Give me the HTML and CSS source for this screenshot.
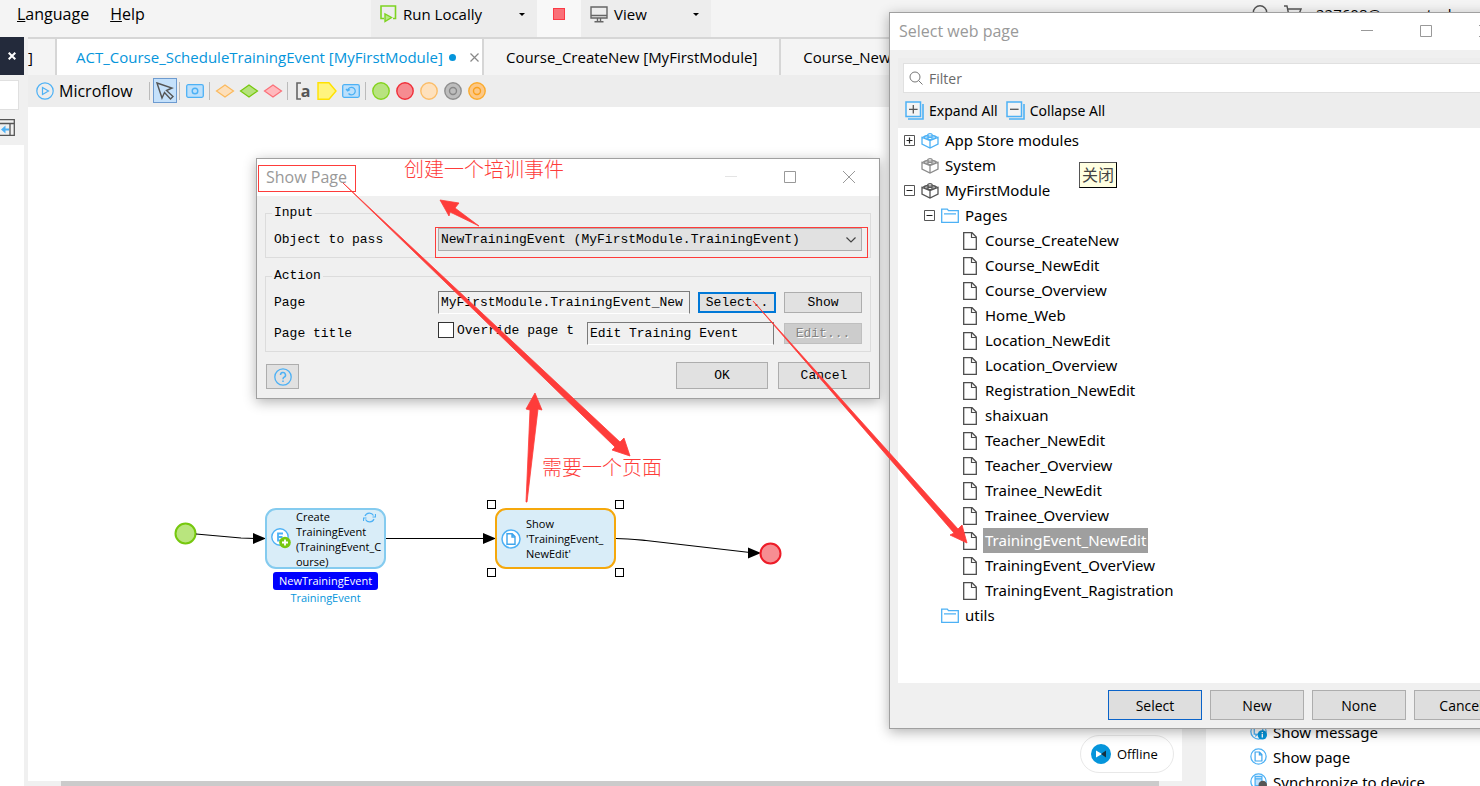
FILE: index.html
```html
<!DOCTYPE html>
<html lang="zh-CN">
<head>
    <meta charset="UTF-8">
    <meta name="viewport" content="width=device-width, initial-scale=1.0">
    <title>ACT_Course_ScheduleTrainingEvent</title>
    <link rel="stylesheet" href="styles.css">
</head>
<body>
    <!-- 图标定义 -->
    <svg class="defs" width="0" height="0" aria-hidden="true">
        <symbol id="i-cube" viewBox="0 0 18 16">
            <path d="M1 4.500v6.700L9 15l8-3.800V4.500L9 7.500zM9 7.500V15" fill="none" stroke="currentColor" stroke-width="1.300"/>
            <path d="M1 4.500 7 2M17 4.500 11 2" fill="none" stroke="currentColor" stroke-width="1.200"/>
            <ellipse cx="9" cy="1.900" rx="2.200" ry="1.200" fill="none" stroke="currentColor" stroke-width="1.200"/>
            <ellipse cx="5.200" cy="4" rx="2.200" ry="1.200" fill="none" stroke="currentColor" stroke-width="1.200"/>
            <ellipse cx="12.800" cy="4" rx="2.200" ry="1.200" fill="none" stroke="currentColor" stroke-width="1.200"/>
            <ellipse cx="9" cy="5.500" rx="2.200" ry="1.200" fill="none" stroke="currentColor" stroke-width="1.200"/>
        </symbol>
        <symbol id="i-folder" viewBox="0 0 18 16">
            <path d="M.7 14.300V1.200h5.600l1.200 1.500h9.800v11.600zM3 5.800h12" fill="none" stroke="#4db1f5" stroke-width="1.300"/>
        </symbol>
        <symbol id="i-page" viewBox="0 0 18 18">
            <path d="M2.700.700h8.300l4.300 4.300v12.300H2.700z" fill="#fff" stroke="#4d4d4d" stroke-width="1.300"/>
            <path d="M10.500 1v4.500H15" fill="none" stroke="#4d4d4d" stroke-width="1.200"/>
        </symbol>
        <symbol id="i-plus" viewBox="0 0 11 11">
            <path d="M.5.5h10v10H.5z" fill="#fff" stroke="#555"/>
            <path d="M2.500 5.500h6M5.500 2.500v6" stroke="#222" stroke-width="1.200"/>
        </symbol>
        <symbol id="i-minus" viewBox="0 0 11 11">
            <path d="M.5.5h10v10H.5z" fill="#fff" stroke="#555"/>
            <path d="M2.500 5.500h6" stroke="#222"/>
        </symbol>
        <symbol id="i-pagecircle" viewBox="0 0 20 20">
            <circle cx="10" cy="10" r="9" fill="#fff" stroke="#4db1f5" stroke-width="1.500"/>
            <path d="M6 4.700h5.200L14 7.500v7.800H6zM11 5v3h3" fill="none" stroke="#3fa5ec" stroke-width="1.400"/>
        </symbol>
        <symbol id="i-win-min" viewBox="0 0 12 12"><path d="M0 5.500h12" stroke="currentColor"/></symbol>
        <symbol id="i-win-max" viewBox="0 0 12 12"><path d="M.5.5h11v11H.5z" fill="none" stroke="currentColor"/></symbol>
        <symbol id="i-win-close" viewBox="0 0 12 12"><path d="M0 0l12 12M12 0 0 12" stroke="currentColor"/></symbol>
    </svg>

    <header class="menubar">
        <nav class="menu">
            <a href="#"><u>L</u>anguage</a>
            <a href="#"><u>H</u>elp</a>
        </nav>
        <button class="menu-btn run-btn">
            <svg width="17" height="18" viewBox="0 0 17 18"><path d="M4 13.500H1V1h14.500v12.500H13" fill="none" stroke="#7ed321" stroke-width="1.600"/><path d="M5 9v7.500l6.500-4z" fill="#b8e986" stroke="#7ed321" stroke-width="1.400"/></svg>
            <span>Run Locally</span>
            <i class="caret"></i>
        </button>
        <button class="menu-btn stop-btn" aria-label="Stop"><i></i></button>
        <button class="menu-btn view-btn">
            <svg width="18" height="17" viewBox="0 0 18 17"><path d="M1 1h16v11H1zM1 9.500h16M7.500 12v3.500M10.500 12v3.500M4.500 15.800h9" fill="none" stroke="#666" stroke-width="1.400"/></svg>
            <span>View</span>
            <i class="caret"></i>
        </button>
        <div class="account">
            <svg width="18" height="18" viewBox="0 0 18 18"><path d="M12.500 12.500 17 17" stroke="#555" stroke-width="1.400"/><circle cx="8" cy="7.500" r="6.700" fill="none" stroke="#555" stroke-width="1.400"/></svg>
            <svg width="18" height="17" viewBox="0 0 18 17"><path d="M0 1h3l2 10h10M3.500 4h13.500l-2 5H5" fill="none" stroke="#555" stroke-width="1.400"/></svg>
            <span>227608@moon-tech.cn</span>
        </div>
    </header>

    <main class="workspace">
        <aside class="rail">
            <button class="rail-close" aria-label="Close panel">
                <svg width="8" height="8" viewBox="0 0 8 8"><path d="M.7.7l6.600 6.600M7.300.7.7 7.300" stroke="#fff" stroke-width="2"/></svg>
            </button>
            <div class="rail-tools">
                <div class="rail-box"></div>
                <svg width="15" height="17" viewBox="0 0 15 17"><path d="M0 .7h14.300v15.600H0M0 4.500h14M10 4.500v12" fill="none" stroke="#555" stroke-width="1.300"/><path d="M9 10.500H4" stroke="#4db1f5" stroke-width="2"/><path d="M5.500 6.500v8L1 10.500z" fill="#4db1f5"/></svg>
            </div>
        </aside>

        <section class="editor">
            <div class="tabs">
                <a class="tab tab-first" href="#">]</a>
                <a class="tab tab-active" href="#">ACT_Course_ScheduleTrainingEvent [MyFirstModule] <i class="dot"></i>
                    <svg width="9" height="9" viewBox="0 0 9 9"><path d="M.5.5l8 8M8.500.5l-8 8" stroke="#888" stroke-width="1.200"/></svg>
                </a>
                <a class="tab" href="#">Course_CreateNew [MyFirstModule]</a>
                <a class="tab tab-last" href="#">Course_NewEdit [MyFirstModule]</a>
            </div>
            <div class="toolbar">
                <svg width="18" height="18" viewBox="0 0 18 18"><circle cx="9" cy="9" r="8.200" fill="none" stroke="#4db1f5" stroke-width="1.200"/><path d="M6.500 5.500v7l6-3.500z" fill="none" stroke="#4db1f5" stroke-width="1.200"/></svg>
                <span class="toolbar-title">Microflow</span>
                <i class="sep"></i>
                <button class="tool tool-on" aria-label="Pointer"><svg width="18" height="18" viewBox="0 0 18 18"><path d="M1 1l15 5-5.500 2.500 6.500 6-2.500 2.500-6-6.500L6 16z" fill="none" stroke="#555" stroke-width="1.400"/></svg></button>
                <i class="sep"></i>
                <button class="tool" aria-label="Activity"><svg width="18" height="14" viewBox="0 0 18 14"><rect x=".7" y=".7" width="16.600" height="12.600" rx="1.500" fill="#bde0fb" stroke="#4db1f5" stroke-width="1.300"/><circle cx="9" cy="7" r="2.800" fill="none" stroke="#4db1f5" stroke-width="1.400"/></svg></button>
                <i class="sep"></i>
                <button class="tool" aria-label="Decision"><svg width="20" height="14" viewBox="0 0 20 14"><path d="M10 1l8.500 6L10 13 1.500 7z" fill="#fddfba" stroke="#fbb95c" stroke-width="1.200"/></svg></button>
                <button class="tool" aria-label="Object type decision"><svg width="20" height="14" viewBox="0 0 20 14"><path d="M10 1l8.500 6L10 13 1.500 7z" fill="#b5e27c" stroke="#76c80e" stroke-width="1.200"/></svg></button>
                <button class="tool" aria-label="Merge"><svg width="20" height="14" viewBox="0 0 20 14"><path d="M10 1l8.500 6L10 13 1.500 7z" fill="#ffb9bd" stroke="#fb6f78" stroke-width="1.200"/></svg></button>
                <i class="sep"></i>
                <button class="tool tool-text" aria-label="Annotation"><svg width="5" height="18" viewBox="0 0 5 18"><path d="M5 1H1v16h4" fill="none" stroke="#666" stroke-width="1.600"/></svg><b>a</b></button>
                <button class="tool" aria-label="Parameter"><svg width="20" height="18" viewBox="0 0 20 18"><path d="M1 .8h11L19 9l-7 8.200H1z" fill="#fff47e" stroke="#ffe100" stroke-width="1.400"/></svg></button>
                <button class="tool" aria-label="Loop"><svg width="18" height="14" viewBox="0 0 18 14"><rect x=".7" y=".7" width="16.600" height="12.600" rx="1.500" fill="#bde0fb" stroke="#4db1f5" stroke-width="1.300"/><path d="M6.500 9.500a3.800 3.800 0 1 0-.8-3M4 5l1.700 2L8 5.500" fill="none" stroke="#4db1f5" stroke-width="1.300"/></svg></button>
                <i class="sep"></i>
                <button class="tool" aria-label="Start event"><svg width="18" height="18" viewBox="0 0 18 18"><circle cx="9" cy="9" r="8.200" fill="#b8e380" stroke="#84d31e" stroke-width="1.400"/></svg></button>
                <button class="tool" aria-label="End event"><svg width="18" height="18" viewBox="0 0 18 18"><circle cx="9" cy="9" r="8.200" fill="#f68c91" stroke="#f0303a" stroke-width="1.400"/></svg></button>
                <button class="tool" aria-label="Error event"><svg width="18" height="18" viewBox="0 0 18 18"><circle cx="9" cy="9" r="8.200" fill="#fee1bd" stroke="#fbbd68" stroke-width="1.400"/></svg></button>
                <button class="tool" aria-label="Break event"><svg width="18" height="18" viewBox="0 0 18 18"><circle cx="9" cy="9" r="8.200" fill="#bdbdbd" stroke="#8f8f8f" stroke-width="1.400"/><circle cx="9" cy="9" r="3.500" fill="none" stroke="#888" stroke-width="1.400"/></svg></button>
                <button class="tool" aria-label="Continue event"><svg width="18" height="18" viewBox="0 0 18 18"><circle cx="9" cy="9" r="8.200" fill="#fcc887" stroke="#fbab2e" stroke-width="1.400"/><circle cx="9" cy="9" r="3.500" fill="none" stroke="#fba11c" stroke-width="1.400"/></svg></button>
            </div>

            <div class="canvas">
                <svg class="flow-lines" width="760" height="500" viewBox="0 0 760 500">
                    <circle cx="157.500" cy="426.500" r="10" fill="#b9e57e" stroke="#76c80e" stroke-width="2"/>
                    <path d="M168 427l45 4 14 .5M358 431.500h98M588 431.500c12 0 20 1 30 2l104 12" fill="none" stroke="#000" stroke-width="1.200"/>
                    <path d="M225 426l13 5.500-13 5.500zM455 426l13 5.500-13 5.500zM720 440.500l13 5.500-13 5.500z"/>
                    <circle cx="742.500" cy="446.500" r="10" fill="#f78d92" stroke="#ed1c28" stroke-width="2"/>
                </svg>
                <div class="node node-create">
                    <svg class="node-icon" width="20" height="21" viewBox="0 0 20 21"><circle cx="9" cy="9" r="8.200" fill="#fff" stroke="#4db1f5" stroke-width="1.400"/><path d="M12 5.500H7v7h5M7 9h4.500" fill="none" stroke="#4db1f5" stroke-width="1.800"/><circle cx="14" cy="14.500" r="5.800" fill="#76c80e"/><path d="M11 14.500h6M14 11.500v6" stroke="#fff" stroke-width="1.800"/></svg>
                    <span>Create<br>TrainingEvent<br>(TrainingEvent_C<br>ourse)</span>
                    <svg class="node-sync" width="13" height="11" viewBox="0 0 13 11"><path d="M2 4a4.700 4.700 0 0 1 8.500-.5M11 7a4.700 4.700 0 0 1-8.500.5M12.500 2v3h-3M.5 9V6h3" fill="none" stroke="#4db1f5" stroke-width="1.200"/></svg>
                </div>
                <div class="node-label">NewTrainingEvent</div>
                <div class="node-type">TrainingEvent</div>
                <div class="node node-show">
                    <svg class="node-icon" width="20" height="20"><use href="#i-pagecircle"/></svg>
                    <span>Show<br>'TrainingEvent_<br>NewEdit'</span>
                    <i class="handle tl"></i><i class="handle tr"></i><i class="handle bl"></i><i class="handle br"></i>
                </div>
                <div class="offline">
                    <svg width="20" height="20" viewBox="0 0 20 20"><circle cx="10" cy="10" r="10" fill="#0595db"/><path d="M5 6.500 11 10l-6 3.500z" fill="#fff"/><path d="M15 6.500 10 10l5 3.500z" fill="#14303f"/></svg>
                    Offline
                </div>
            </div>
            <div class="scrollbar"><i></i></div>
        </section>

        <aside class="toolbox">
            <ul>
                <li><svg width="17" height="17" viewBox="0 0 20 20"><circle cx="10" cy="10" r="9" fill="#fff" stroke="#4db1f5" stroke-width="1.500"/><path d="M5 5h10v8H9l-2 2v-2H5z" fill="none" stroke="#4db1f5" stroke-width="1.500"/><circle cx="14.500" cy="14" r="5.500" fill="#0595db"/><path d="M14.500 10.500v1.500M14.500 13v4" stroke="#fff" stroke-width="1.600"/></svg>Show message</li>
                <li><svg width="17" height="17"><use href="#i-pagecircle"/></svg>Show page</li>
                <li><svg width="17" height="17" viewBox="0 0 20 20"><circle cx="10" cy="10" r="9" fill="#fff" stroke="#4db1f5" stroke-width="1.500"/><path d="M6 4h8v11H6zM6 7h8" fill="#bde0fb" stroke="#4db1f5" stroke-width="1.500"/><circle cx="15" cy="14" r="5" fill="#555"/></svg>Synchronize to device</li>
            </ul>
        </aside>
    </main>

    <!-- Show Page 窗口 -->
    <div class="window show-page">
        <div class="titlebar">
            <span>Show Page</span>
            <button class="dim" aria-label="Minimize"><svg width="12" height="12"><use href="#i-win-min"/></svg></button>
            <button aria-label="Maximize"><svg width="12" height="12"><use href="#i-win-max"/></svg></button>
            <button aria-label="Close"><svg width="12" height="12"><use href="#i-win-close"/></svg></button>
        </div>
        <form class="form">
            <fieldset>
                <legend>Input</legend>
                <div class="grid">
                    <label for="object">Object to pass</label>
                    <div class="combo">
                        <select id="object"><option>NewTrainingEvent (MyFirstModule.TrainingEvent)</option></select>
                        <svg width="10" height="6" viewBox="0 0 10 6"><path d="M.5.5 5 5 9.500.5" fill="none" stroke="#444" stroke-width="1.200"/></svg>
                    </div>
                </div>
            </fieldset>
            <fieldset>
                <legend>Action</legend>
                <div class="grid">
                    <label for="page">Page</label>
                    <input id="page" type="text" value="MyFirstModule.TrainingEvent_New">
                    <button type="button" class="btn btn-focus">Select..</button>
                    <button type="button" class="btn">Show</button>
                    <label for="page-title">Page title</label>
                    <div class="override">
                        <label><input type="checkbox">Override page t</label>
                        <input id="page-title" type="text" value="Edit Training Event">
                    </div>
                    <button type="button" class="btn" disabled>Edit...</button>
                </div>
            </fieldset>
            <div class="form-footer">
                <button type="button" class="btn help" aria-label="Help">
                    <svg width="18" height="18" viewBox="0 0 18 18"><circle cx="9" cy="9" r="8.200" fill="none" stroke="#4db1f5" stroke-width="1.300"/><path d="M6.500 7a2.500 2.500 0 1 1 3.700 2.200C9.300 9.700 9 10 9 11.200M9 12.500V14" fill="none" stroke="#4db1f5" stroke-width="1.500"/></svg>
                </button>
                <button type="button" class="btn wide">OK</button>
                <button type="button" class="btn wide">Cancel</button>
            </div>
        </form>
    </div>

    <!-- Select web page 窗口 -->
    <div class="window select-page">
        <div class="titlebar">
            <span>Select web page</span>
            <button aria-label="Minimize"><svg width="12" height="12"><use href="#i-win-min"/></svg></button>
            <button aria-label="Maximize"><svg width="12" height="12"><use href="#i-win-max"/></svg></button>
            <button aria-label="Close"><svg width="12" height="12"><use href="#i-win-close"/></svg></button>
        </div>
        <div class="picker">
            <div class="picker-head">
                <label class="filter">
                    <svg width="14" height="14" viewBox="0 0 14 14"><circle cx="6" cy="6" r="5" fill="none" stroke="#777"/><path d="M9.500 9.500 13.500 13.500" stroke="#777"/></svg>
                    <input type="text" placeholder="Filter" aria-label="Filter">
                </label>
                <div class="picker-tools">
                    <button><svg width="19" height="19" viewBox="0 0 19 19"><path d="M3 18h15V3" fill="none" stroke="#4db1f5" stroke-width="1.600"/><path d="M1 1h14.500v14.500H1z" fill="#f4f4f4" stroke="#4db1f5" stroke-width="1.500"/><path d="M4 8.300h8.600M8.300 4v8.600" stroke="#555" stroke-width="1.300"/></svg>Expand All</button>
                    <button><svg width="19" height="19" viewBox="0 0 19 19"><path d="M3 18h15V3" fill="none" stroke="#4db1f5" stroke-width="1.600"/><path d="M1 1h14.500v14.500H1z" fill="#f4f4f4" stroke="#4db1f5" stroke-width="1.500"/><path d="M4 8.300h8.600" stroke="#555" stroke-width="1.300"/></svg>Collapse All</button>
                </div>
            </div>
            <ul class="tree">
                <li><svg class="exp"><use href="#i-plus"/></svg><svg class="ico blue"><use href="#i-cube"/></svg><span>App Store modules</span></li>
                <li><i class="exp"></i><svg class="ico grey"><use href="#i-cube"/></svg><span>System</span></li>
                <li><svg class="exp"><use href="#i-minus"/></svg><svg class="ico"><use href="#i-cube"/></svg><span>MyFirstModule</span></li>
                <li class="l1"><svg class="exp"><use href="#i-minus"/></svg><svg class="ico"><use href="#i-folder"/></svg><span>Pages</span></li>
                <li class="l2"><svg class="ico"><use href="#i-page"/></svg><span>Course_CreateNew</span></li>
                <li class="l2"><svg class="ico"><use href="#i-page"/></svg><span>Course_NewEdit</span></li>
                <li class="l2"><svg class="ico"><use href="#i-page"/></svg><span>Course_Overview</span></li>
                <li class="l2"><svg class="ico"><use href="#i-page"/></svg><span>Home_Web</span></li>
                <li class="l2"><svg class="ico"><use href="#i-page"/></svg><span>Location_NewEdit</span></li>
                <li class="l2"><svg class="ico"><use href="#i-page"/></svg><span>Location_Overview</span></li>
                <li class="l2"><svg class="ico"><use href="#i-page"/></svg><span>Registration_NewEdit</span></li>
                <li class="l2"><svg class="ico"><use href="#i-page"/></svg><span>shaixuan</span></li>
                <li class="l2"><svg class="ico"><use href="#i-page"/></svg><span>Teacher_NewEdit</span></li>
                <li class="l2"><svg class="ico"><use href="#i-page"/></svg><span>Teacher_Overview</span></li>
                <li class="l2"><svg class="ico"><use href="#i-page"/></svg><span>Trainee_NewEdit</span></li>
                <li class="l2"><svg class="ico"><use href="#i-page"/></svg><span>Trainee_Overview</span></li>
                <li class="l2 selected"><svg class="ico"><use href="#i-page"/></svg><span>TrainingEvent_NewEdit</span></li>
                <li class="l2"><svg class="ico"><use href="#i-page"/></svg><span>TrainingEvent_OverView</span></li>
                <li class="l2"><svg class="ico"><use href="#i-page"/></svg><span>TrainingEvent_Ragistration</span></li>
                <li class="l1"><i class="exp"></i><svg class="ico"><use href="#i-folder"/></svg><span>utils</span></li>
            </ul>
        </div>
        <div class="picker-footer">
            <button class="primary">Select</button>
            <button>New</button>
            <button>None</button>
            <button>Cancel</button>
        </div>
        <div class="tooltip">关闭</div>
    </div>

    <!-- 标注 -->
    <div class="notes">
        <svg width="1480" height="786" viewBox="0 0 1480 786">
            <g fill="none" stroke="#fe3c3a">
                <rect x="258.500" y="165.500" width="97" height="26"/>
                <rect x="435.500" y="227.500" width="432" height="30"/>
            </g>
            <g fill="#fe3c3a" stroke="#fe3c3a" stroke-width=".8">
                <path d="M440 200l19 3-4 5 24 18-29-14-1 4z"/>
                <path d="M343 183l277 259 4-4 6 18-18-6 3-3z"/>
                <path d="M526 502l4-92-4-1 9-16 7 17-4-1-11 93z"/>
                <path d="M753 301l205 228 4-4 5 18-17-8 4-2z"/>
            </g>
        </svg>
        <span class="note note-event">创建一个培训事件</span>
        <span class="note note-page">需要一个页面</span>
    </div>
</body>
</html>
```
FILE: styles.css
```css
* {
    box-sizing: border-box;
}

body {
    margin: 0;
    height: 100vh;
    display: flex;
    flex-direction: column;
    position: relative;
    overflow: hidden;
    font-family: "Open Sans", "Noto Sans CJK SC", sans-serif;
    font-size: 15px;
    color: #000;
    background-color: #f4f4f4;
}

a {
    color: inherit;
    text-decoration: none;
}

button,
input,
select {
    font: inherit;
    color: inherit;
    margin: 0;
    padding: 0;
}

button {
    border: none;
    background: none;
}

svg {
    display: block;
    flex-shrink: 0;
}

ul {
    list-style: none;
    margin: 0;
    padding: 0;
}

.defs {
    position: absolute;
}

/* 菜单栏 */
.menubar {
    display: flex;
    height: 37px;
    flex-shrink: 0;
}

.menu {
    display: flex;
    gap: 21px;
    width: 371px;
    padding: 3px 0 0 17px;
    font-size: 16px;
}

.menu-btn {
    display: flex;
    align-items: center;
    gap: 6px;
    padding: 0 12px 9px 9px;
    background-color: #ededed;
}

.run-btn {
    width: 166px;
}

.view-btn {
    width: 130px;
}

.stop-btn {
    width: 44px;
    padding-left: 16px;
    background-color: #f8f8f8;
}

.stop-btn i {
    width: 12px;
    height: 12px;
    border: 1px solid #fb3a45;
    background-color: #fa7078;
}

.caret {
    margin-left: auto;
    border: 3px solid transparent;
    border-top-color: #000;
    border-bottom: none;
}

.account {
    display: flex;
    gap: 14px;
    margin-left: auto;
    padding: 5px 0 0;
    width: 228px;
    line-height: 18px;
    white-space: nowrap;
}

/* 工作区 */
.workspace {
    flex: 1;
    display: flex;
    min-height: 0;
    background-color: #f0f0f0;
}

.rail {
    width: 24px;
    margin-right: 4px;
    background-color: #fff;
}

.rail-close {
    display: flex;
    align-items: center;
    justify-content: center;
    width: 24px;
    height: 38px;
    background-color: #232a3b;
}

.rail-tools {
    height: 70px;
    padding-top: 5px;
    background-color: #f0f0f0;
}

.rail-box {
    width: 19px;
    height: 30px;
    margin-bottom: 9px;
    border: 1px solid #e0e0e0;
    border-left: none;
    background-color: #fff;
}

.editor {
    flex: 1;
    min-width: 0;
    display: flex;
    flex-direction: column;
}

.tabs {
    display: flex;
    height: 38px;
    border-top: 2px solid #d6d6d6;
    background-color: #f4f4f4;
    overflow: hidden;
    white-space: nowrap;
}

.tab {
    display: flex;
    align-items: center;
    flex-shrink: 0;
    padding: 0 22px;
    border-right: 2px solid #d6d6d6;
}

.tab-first {
    width: 29px;
    padding: 0;
}

.tab-active {
    padding: 0 3px 0 19px;
    color: #0595db;
    background-color: #fff;
}

.tab-active svg {
    margin-left: 14px;
}

.dot {
    width: 7px;
    height: 7px;
    margin-left: 6px;
    border-radius: 50%;
    background-color: #0595db;
}

.toolbar {
    display: flex;
    align-items: center;
    height: 32px;
    padding: 0 0 1px 8px;
    background-color: #ededed;
}

.toolbar-title {
    width: 88px;
    margin-left: 5px;
    font-size: 16px;
}

.sep {
    width: 2px;
    height: 18px;
    margin: 0 2px;
    border-left: 1px solid #bbb;
}

.tool {
    display: flex;
    align-items: center;
    justify-content: center;
    width: 24px;
    height: 25px;
}

.tool-on {
    border: 1px solid #6d9bd0;
    background-color: #c5e1fb;
}

.tool-text b {
    font-size: 16px;
    line-height: 18px;
    color: #555;
}

.canvas {
    flex: 1;
    position: relative;
    min-height: 0;
    background-color: #fff;
}

.flow-lines {
    position: absolute;
    left: 0;
    top: 0;
}

.node {
    position: absolute;
    display: flex;
    align-items: center;
    gap: 5px;
    width: 121px;
    height: 61px;
    padding: 0 4px;
    border: 2px solid #84cbef;
    border-radius: 11px;
    background-color: #d9edf8;
    font-size: 11px;
    line-height: 15px;
}

.node span {
    white-space: nowrap;
}

.node-create {
    left: 237px;
    top: 401px;
}

.node-show {
    left: 467px;
    top: 401px;
    border-color: #f5a80c;
}

.node-sync {
    position: absolute;
    right: 8px;
    top: 2px;
}

.node-label,
.node-type {
    position: absolute;
    left: 245px;
    width: 105px;
    font-size: 11px;
    line-height: 18px;
    text-align: center;
}

.node-label {
    top: 465px;
    border-radius: 3px;
    color: #fff;
    background-color: #0000fe;
}

.node-type {
    top: 482px;
    color: #0595db;
}

.handle {
    position: absolute;
    width: 9px;
    height: 9px;
    border: 1px solid #000;
    background-color: #fff;
}

.tl { left: -10px; top: -10px; }
.tr { right: -10px; top: -10px; }
.bl { left: -10px; bottom: -10px; }
.br { right: -10px; bottom: -10px; }

.offline {
    position: absolute;
    right: 8px;
    bottom: 8px;
    display: flex;
    align-items: center;
    gap: 6px;
    width: 94px;
    height: 38px;
    padding-left: 10px;
    border: 1px solid #e8e8e8;
    border-radius: 19px;
    font-size: 13px;
}

.scrollbar {
    height: 5px;
    padding: 0 23px 0 33px;
}

.scrollbar i {
    display: block;
    height: 5px;
    background-color: #cbcbcb;
}

.toolbox {
    display: flex;
    align-items: flex-end;
    width: 274px;
    margin-left: 24px;
    background-color: #fff;
    font-family: "Noto Sans", "Noto Sans CJK SC", sans-serif;
}

.toolbox ul {
    margin-bottom: -8px;
    padding-left: 44px;
}

.toolbox li {
    display: flex;
    align-items: center;
    gap: 6px;
    height: 25px;
}

/* 窗口 */
.window {
    position: absolute;
    border: 1px solid #a0a0a0;
    background-color: #f0f0f0;
    box-shadow: 0 3px 12px rgba(0, 0, 0, 0.3);
}

.titlebar {
    display: flex;
    align-items: center;
    height: 37px;
    padding: 0 1px 1px 9px;
    color: #999;
    background-color: #fff;
    font-size: 16px;
}

.titlebar span {
    flex: 1;
}

.titlebar button {
    display: flex;
    align-items: center;
    justify-content: center;
    width: 59px;
    height: 36px;
}

.titlebar .dim {
    color: #e4e4e4;
}

.show-page {
    left: 256px;
    top: 158px;
    width: 624px;
}

.form {
    padding: 9px 8px;
    font-family: "Liberation Mono", "Noto Sans CJK SC", monospace;
    font-size: 13px;
}

fieldset {
    margin: 0 0 10px;
    padding: 7px 8px 6px;
    border: 1px solid #dcdcdc;
}

legend {
    padding: 0 2px;
    margin-left: -2px;
    line-height: 16px;
}

.grid {
    display: grid;
    grid-template-columns: 156px 1fr 78px 78px;
    gap: 8px;
    align-items: center;
}

.combo {
    grid-column: span 3;
    position: relative;
}

.combo select {
    display: block;
    width: 100%;
    height: 23px;
    padding-left: 2px;
    appearance: none;
    border: 1px solid #adadad;
    border-radius: 0;
    background-color: #e1e1e1;
}

.combo svg {
    position: absolute;
    right: 6px;
    top: 9px;
}

.form input[type="text"] {
    width: 100%;
    min-width: 0;
    height: 23px;
    padding: 0 2px;
    border: 1px solid #7a7a7a;
    border-bottom-color: #fff;
    background-color: #f0f0f0;
}

.override {
    grid-column: span 2;
    display: flex;
    align-items: flex-start;
    padding-right: 2px;
}

.override label {
    display: flex;
    align-items: center;
    gap: 3px;
    flex: 0 0 149px;
    white-space: nowrap;
}

.override input[type="checkbox"] {
    appearance: none;
    width: 16px;
    height: 16px;
    border: 1px solid #333;
    background-color: #fff;
}

.btn {
    height: 21px;
    border: 1px solid #adadad;
    background-color: #e1e1e1;
}

.btn:disabled {
    color: #838383;
    border-color: #bfbfbf;
    background-color: #ccc;
    text-shadow: 1px 1px #fff;
}

.btn-focus {
    border: 2px solid #0078d7;
}

.form-footer {
    display: flex;
    align-items: flex-end;
    gap: 10px;
    padding: 0 1px;
}

.help {
    display: flex;
    align-items: center;
    justify-content: center;
    width: 33px;
    height: 25px;
    margin-right: auto;
}

.wide {
    width: 92px;
    height: 27px;
}

.select-page {
    left: 889px;
    top: 12px;
    width: 627px;
}

.picker {
    margin: 8px 8px 0;
}

.picker-head {
    padding: 5px 5px 0;
    background-color: #ededed;
}

.filter {
    display: flex;
    align-items: center;
    gap: 6px;
    height: 30px;
    padding-left: 5px;
    border: 1px solid #e0e0e0;
    background-color: #fff;
    font-size: 14px;
}

.filter input {
    flex: 1;
    border: none;
    outline: none;
}

.filter input::placeholder {
    color: #6a6a6a;
}

.picker-tools {
    display: flex;
    gap: 8px;
    height: 35px;
    padding-left: 2px;
}

.picker-tools button {
    display: flex;
    align-items: center;
    gap: 5px;
    font-family: "Noto Sans", sans-serif;
    font-size: 14px;
}

.tree {
    height: 555px;
    background-color: #fff;
    font-family: "Noto Sans", "Noto Sans CJK SC", sans-serif;
}

.tree li {
    display: flex;
    align-items: center;
    height: 25px;
    padding-left: 6px;
}

.tree .l1 {
    padding-left: 26px;
}

.tree .l2 {
    padding-left: 63px;
}

.tree span {
    margin-left: 4px;
    padding: 0 2px;
    line-height: 25px;
}

.tree .selected span {
    color: #fff;
    background-color: #9f9f9f;
}

.exp {
    width: 11px;
    height: 11px;
    margin-right: 6px;
}

.ico {
    width: 18px;
    height: 18px;
    color: #555;
}

.ico.blue {
    color: #4db1f5;
}

.ico.grey {
    color: #8c8c8c;
}

.picker-footer {
    display: flex;
    justify-content: flex-end;
    gap: 8px;
    padding: 7px 7px 8px;
}

.picker-footer button {
    width: 94px;
    height: 30px;
    border: 1px solid #adadad;
    background-color: #dedede;
    font-size: 14px;
}

.picker-footer .primary {
    border-color: #0a63c9;
}

.tooltip {
    position: absolute;
    left: 189px;
    top: 149px;
    padding: 0 2px;
    border: 1px solid #555;
    border-right-color: #000;
    border-bottom-color: #000;
    background-color: #ffffe1;
    font-size: 16px;
    line-height: 24px;
    color: #444;
}

.notes {
    position: absolute;
    left: 0;
    top: 0;
    pointer-events: none;
}

.note {
    position: absolute;
    font-family: "Noto Sans CJK SC", sans-serif;
    font-size: 20px;
    font-weight: 300;
    line-height: 24px;
    color: #fe3c3a;
    white-space: nowrap;
}

.note-event {
    left: 404px;
    top: 157px;
}

.note-page {
    left: 542px;
    top: 455px;
}
```
